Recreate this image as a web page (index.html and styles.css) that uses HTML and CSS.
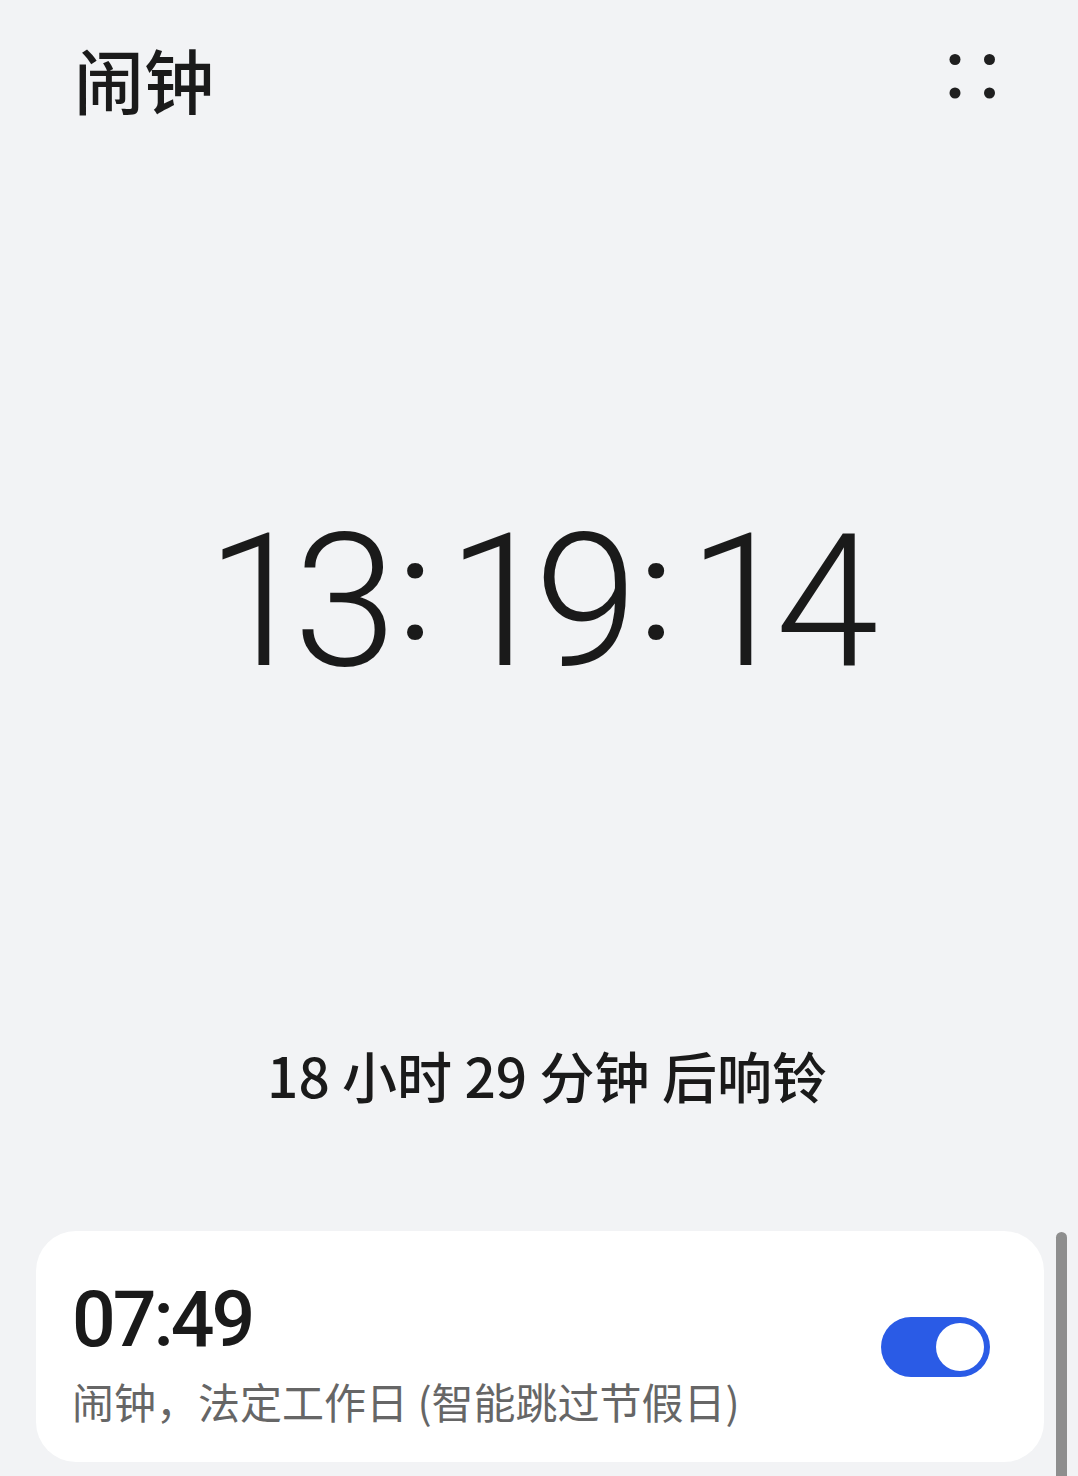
FILE: index.html
```html
<!DOCTYPE html>
<html lang="zh-CN">
<head>
<meta charset="utf-8">
<title>闹钟</title>
<link rel="stylesheet" href="styles.css">
</head>
<body>
<div class="page">
  <header class="header">
    <h1 class="title">闹钟</h1>
    <svg class="more" width="48" height="48" viewBox="0 0 48 48" aria-label="更多">
      <circle cx="7" cy="7.5" r="5.5" fill="#1f1f1f"/>
      <circle cx="41.5" cy="7.5" r="5.5" fill="#1f1f1f"/>
      <circle cx="7" cy="41" r="5.5" fill="#1f1f1f"/>
      <circle cx="41.5" cy="41" r="5.5" fill="#1f1f1f"/>
    </svg>
  </header>
  <div class="clock">13<span class="colon">:</span>19<span class="colon">:</span>14</div>
  <div class="countdown">18 小时 29 分钟 后响铃</div>
  <section class="card">
    <div class="card-text">
      <div class="alarm-time">07:49</div>
      <div class="alarm-desc">闹钟，法定工作日 (智能跳过节假日)</div>
    </div>
    <div class="toggle"><span class="knob"></span></div>
  </section>
  <div class="scrollbar"></div>
</div>
</body>
</html>
```

FILE: styles.css
```css
* { box-sizing: border-box; }
html, body {
  margin: 0;
  padding: 0;
  background: #f2f3f5;
}
body {
  width: 1078px;
  height: 1476px;
  overflow: hidden;
  font-family: "Noto Sans CJK SC", "Noto Sans", sans-serif;
  color: #1a1a1a;
}
.page {
  position: relative;
  height: 1476px;
  padding-top: 44px;
}
.header {
  display: flex;
  justify-content: space-between;
  align-items: flex-start;
  padding: 0 82px 0 74px;
  height: 70px;
}
.title {
  margin: 0;
  font-size: 70px;
  line-height: 1;
  font-weight: 500;
  color: #1a1a1a;
}
.more {
  display: block;
  margin-top: 8px;
}
.clock {
  margin-top: 394px;
  height: 186px;
  font-family: Roboto, "Noto Sans", sans-serif;
  font-weight: 300;
  font-size: 186px;
  line-height: 1;
  letter-spacing: -16px;
  text-align: center;
  padding-right: 9px;
  white-space: nowrap;
  color: #1a1a1a;
}
.colon {
  font-size: 143px;
  font-weight: 400;
  letter-spacing: 0;
  vertical-align: 26px;
  margin: 0 15px 0 17px;
}
.countdown {
  margin-top: 353px;
  height: 55px;
  font-size: 55px;
  line-height: 1;
  font-weight: 500;
  text-align: center;
  padding-left: 16px;
  color: #1a1a1a;
}
.card {
  margin: 129px 34px 0 36px;
  height: 231px;
  background: #ffffff;
  border-radius: 40px;
  display: flex;
  align-items: center;
  justify-content: space-between;
  padding: 0 54px 0 36px;
}
.card-text {
  display: flex;
  flex-direction: column;
  gap: 21px;
  padding-top: 11px;
}
.alarm-time {
  font-family: Roboto, "Noto Sans", sans-serif;
  font-weight: 500;
  font-size: 77px;
  line-height: 1;
  height: 77px;
  letter-spacing: -3px;
  color: #1a1a1a;
}
.alarm-desc {
  font-size: 42px;
  line-height: 1;
  height: 42px;
  color: #666666;
}
.toggle {
  width: 109px;
  height: 60px;
  border-radius: 30px;
  background: #2a5be6;
  display: flex;
  align-items: center;
  justify-content: flex-end;
  padding-right: 6px;
}
.knob {
  width: 48px;
  height: 48px;
  border-radius: 50%;
  background: #ffffff;
}
.scrollbar {
  position: absolute;
  left: 1056px;
  top: 1232px;
  width: 11px;
  bottom: 0;
  background: #8e8e8e;
  border-radius: 6px 6px 0 0;
}
```
